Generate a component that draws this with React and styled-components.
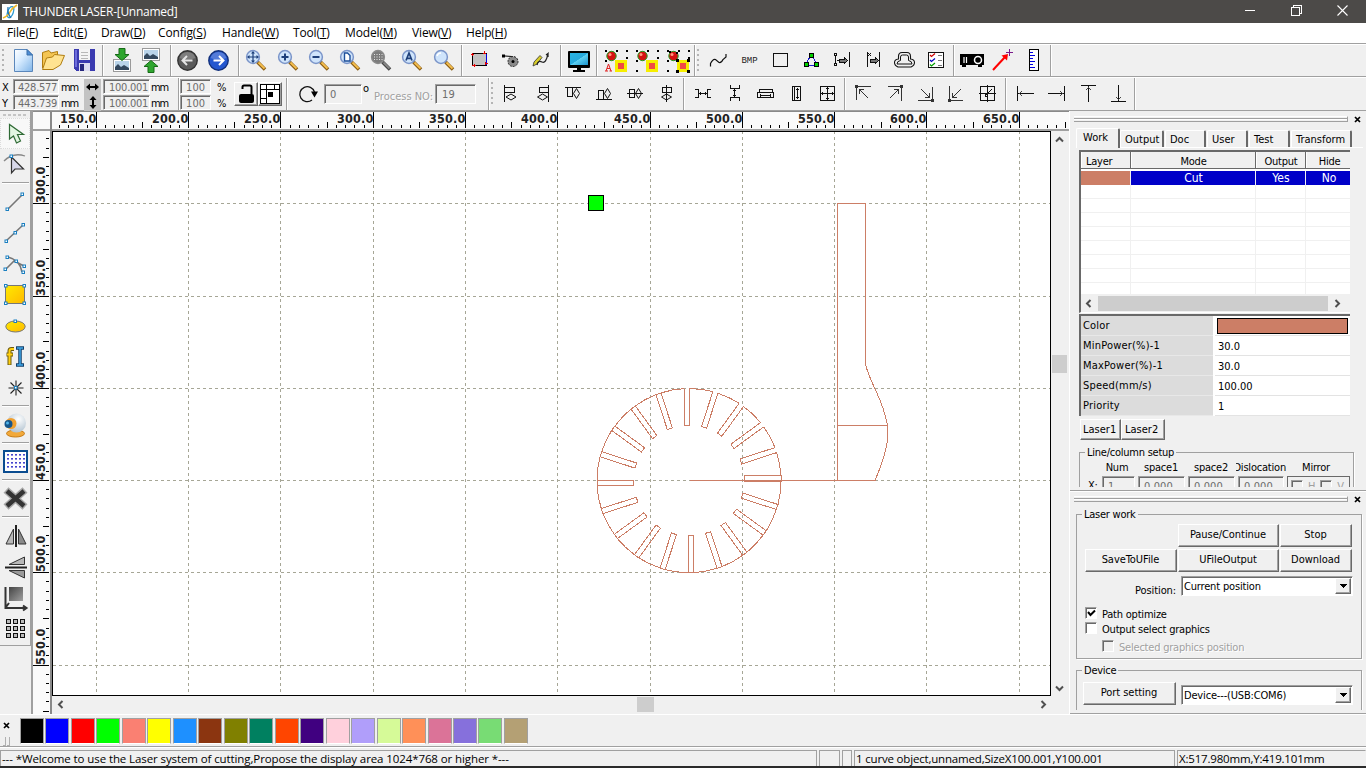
import React from "react";
import styled, { createGlobalStyle, css } from "styled-components";

const TAHOMA = `"DejaVu Sans Condensed", "DejaVu Sans", Tahoma, sans-serif`;
const SEGOE = `"Open Sans", "Noto Sans", "Segoe UI", sans-serif`;
const FACE = "#f0f0f0";
const SHADOW = "#a0a0a0";
const DARK = "#696969";
const CUT = "#cc7e66";

const Global = createGlobalStyle`
  * { box-sizing: border-box; }
  html, body { margin: 0; padding: 0; background: ${FACE}; }
  svg { display: block; flex: none; }
`;

const raised = css`
  border: 1px solid;
  border-color: #fff ${DARK} ${DARK} #fff;
  box-shadow: inset -1px -1px 0 ${SHADOW};
`;
const sunken = css`
  border: 1px solid;
  border-color: ${SHADOW} #fff #fff ${SHADOW};
  box-shadow: inset 1px 1px 0 ${DARK};
`;

const Window = styled.div`
  width: 1366px;
  height: 768px;
  overflow: hidden;
  display: flex;
  flex-direction: column;
  background: ${FACE};
  color: #000;
  font: 11px/13px ${TAHOMA};
  font-stretch: condensed;
  letter-spacing: -0.25px;
  white-space: nowrap;
`;

/* ---------- title and menu ---------- */
const TitleBar = styled.header`
  height: 23px;
  flex: none;
  display: flex;
  align-items: center;
  background: #4c4a48;
  color: #fff;
  font: 12px/20px ${SEGOE};
  letter-spacing: -0.27px;
  padding-left: 2px;
`;
const TitleText = styled.span`
  flex: 1;
  padding-left: 5px;
`;
const Caption = styled.div`
  display: flex;
  width: 139px;
  justify-content: space-around;
  margin-top: -3px;
`;
const MenuBar = styled.nav`
  height: 20px;
  flex: none;
  display: flex;
  background: #fff;
  font: 12px/20px ${SEGOE};
  letter-spacing: -0.15px;
  padding-left: 7px;
`;
const MenuItem = styled.span`
  width: ${(p) => p.$w}px;
  flex: none;
  u { text-underline-offset: 1px; }
`;

/* ---------- toolbars ---------- */
const Bar = styled.div`
  flex: none;
  display: flex;
  height: ${(p) => p.$h}px;
  border-top: 1px solid #fff;
  border-bottom: 1px solid ${SHADOW};
`;
const TopRule = styled.div`
  height: 1px;
  flex: none;
  background: ${SHADOW};
`;
const Group = styled.div`
  flex: none;
  display: flex;
  align-items: center;
  width: ${(p) => p.$w}px;
  padding-left: ${(p) => p.$pad || 0}px;
  padding-bottom: ${(p) => p.$lift || 0}px;
  border-right: 1px solid ${SHADOW};
  box-shadow: 1px 0 0 #fff;
`;
const Slot = styled.div`
  width: ${(p) => p.$w || 31}px;
  height: 30px;
  flex: none;
  display: flex;
  align-items: center;
  justify-content: center;
`;
const Grip = styled.div`
  width: 2px;
  height: 22px;
  margin-left: 2px;
  margin-top: 4px;
  flex: none;
  background: repeating-linear-gradient(#b4b4b4 0 2px, transparent 2px 5px);
`;

const Field = styled.div`
  ${sunken}
  flex: none;
  width: ${(p) => p.$w}px;
  height: ${(p) => p.$h || 15}px;
  padding: ${(p) => p.$p || "1px 0 0 5px"};
  overflow: hidden;
  color: #6d6d6d;
  background: ${FACE};
  letter-spacing: ${(p) => p.$ls || "0.1px"};
`;
const Coords = styled.div`
  display: grid;
  grid-template-columns: 13px 46px 25px 19px 47px 28px;
  grid-template-rows: 15px 15px;
  row-gap: 1px;
  width: 178px;
  flex: none;
  align-content: start;
`;
const Label = styled.span`
  padding: ${(p) => p.$p || "2px 0 0 2px"};
  letter-spacing: ${(p) => p.$ls || "0"};
`;
const DisabledText = styled.span`
  color: #a0a0a0;
  text-shadow: 1px 1px 0 #fff;
`;
const Toggle = styled.div`
  background: #c3c3c3;
  height: 16px;
  width: 17px;
  display: flex;
  align-items: center;
  justify-content: center;
`;
const Scales = styled.div`
  display: grid;
  grid-template-columns: 31px 22px;
  grid-template-rows: 15px 15px;
  row-gap: 1px;
  align-content: start;
  width: 54px;
`;
const SquareButton = styled.div`
  ${raised}
  width: 24px;
  height: 24px;
  flex: none;
  display: flex;
  align-items: center;
  justify-content: center;
`;

/* ---------- work area ---------- */
const Main = styled.div`
  flex: none;
  height: 603px;
  display: flex;
`;
const ToolColumn = styled.div`
  width: 31px;
  flex: none;
  display: flex;
  flex-direction: column;
  align-items: center;
  height: 535px;
  border-right: 1px solid ${SHADOW};
  border-bottom: 1px solid ${SHADOW};
  padding-top: 3px;
`;
const ToolGrip = styled.div`
  width: 24px;
  height: 2px;
  margin-bottom: 2px;
  flex: none;
  background: repeating-linear-gradient(90deg, #c4c4c4 0 3px, transparent 3px 5px);
`;
const ToolRule = styled.div`
  width: 27px;
  height: 2px;
  margin: 2px 0;
  flex: none;
  background: ${SHADOW};
  border-bottom: 1px solid #fff;
`;
const ToolSlot = styled.div`
  width: 30px;
  height: 31px;
  flex: none;
  display: flex;
  align-items: center;
  justify-content: center;
  background: ${(p) => (p.$on ? "#f8f8f8" : "transparent")};
  border: ${(p) => (p.$on ? "1px dotted #dcdcdc" : "none")};
`;
const SideRuler = styled.div`
  width: 21px;
  flex: none;
  border-left: 2px solid ${SHADOW};
  border-right: 2px solid #8a8a8a;
  background: #fafafa;
`;
const CanvasColumn = styled.div`
  width: 1017px;
  flex: none;
`;
const TopRuler = styled.div`
  height: 20px;
  border-top: 1px solid #8a8a8a;
  border-bottom: 2px solid ${SHADOW};
  background: #fafafa;
`;
const CanvasRow = styled.div`
  display: flex;
  height: 565px;
`;
const Sheet = styled.div`
  width: 999px;
  height: 565px;
  flex: none;
  background: #fff;
  border: 1px solid #000;
`;
const VScroll = styled.div`
  flex: 1;
  display: flex;
  flex-direction: column;
  align-items: center;
  padding: 4px 1px 3px 0;
  justify-content: space-between;
`;
const HScroll = styled.div`
  height: 18px;
  display: flex;
  align-items: center;
  justify-content: space-between;
  padding: 0 21px 1px 4px;
`;
const Thumb = styled.div`
  background: #cdcdcd;
  width: ${(p) => p.$w}px;
  height: ${(p) => p.$h}px;
  margin: ${(p) => p.$m || 0};
`;

/* ---------- right dock ---------- */
const Dock = styled.aside`
  flex: 1;
  border-left: 1px solid #fff;
  display: flex;
  flex-direction: column;
`;
const DockPane = styled.section`
  height: ${(p) => p.$h}px;
  flex: none;
  border-bottom: 1px solid ${SHADOW};
  box-shadow: 0 1px 0 #fff;
`;
const PaneBody = styled.div`
  height: ${(p) => p.$h}px;
  overflow: hidden;
`;
const PaneHead = styled.div`
  display: flex;
  align-items: center;
  height: 12px;
  margin: 2px 0 0 4px;
  gap: 6px;
`;
const PaneGrip = styled.div`
  width: 274px;
  height: 6px;
  border-top: 1px solid #fff;
  border-bottom: 1px solid ${SHADOW};
  border-right: 1px solid ${SHADOW};
  background: linear-gradient(#f0f0f0 0 1px, ${SHADOW} 1px 2px, #fff 2px 3px, #f0f0f0 3px);
`;
const Tabs = styled.div`
  display: flex;
  align-items: flex-end;
  height: 20px;
  margin: 3px 3px 0 6px;
  border-bottom: 1px solid #fff;
`;
const Tab = styled.div`
  width: ${(p) => p.$w}px;
  height: ${(p) => (p.$on ? 20 : 17)}px;
  margin-right: ${(p) => (p.$on ? 0 : 1)}px;
  margin-bottom: ${(p) => (p.$on ? -1 : 0)}px;
  flex: none;
  padding: ${(p) => (p.$on ? "2px 0 0 6px" : "2px 0 0 4px")};
  background: ${FACE};
  border-top: 1px solid #fff;
  border-left: 1px solid #fff;
  border-right: 2px solid ${DARK};
  border-radius: 2px 2px 0 0;
  letter-spacing: 0;
`;
const LayerBox = styled.div`
  width: 271px;
  height: 163px;
  margin: 2px 0 0 9px;
  border-left: 2px solid ${DARK};
  border-top: 2px solid ${DARK};
  border-bottom: 1px solid #fff;
  background: #fff;
  overflow: hidden;
`;
const columns = css`
  display: grid;
  grid-template-columns: 50px 125px 50px 46px;
`;
const LayerHead = styled.div`
  ${columns}
  height: 17px;
  margin-bottom: 2px;
  border-bottom: 1px solid ${DARK};
  background: ${FACE};
`;
const HeadCell = styled.div`
  border-right: ${(p) => (p.$last ? "none" : `1px solid ${DARK}`)};
  border-left: 1px solid #fff;
  text-align: ${(p) => (p.$left ? "left" : "center")};
  padding: 3px 0 0 ${(p) => (p.$left ? 4 : 0)}px;
  height: 16px;
`;
const LayerRow = styled.div`
  ${columns}
  height: ${(p) => p.$h || 14}px;
`;
const Cell = styled.div`
  border-right: 1px solid #f0f0f0;
  border-bottom: 1px solid #f0f0f0;
  background: ${(p) => p.$bg || "#fff"};
  color: #fff;
  font-size: 12px;
  line-height: 14px;
  letter-spacing: 0;
  text-align: center;
  padding-left: 1px;
`;
const ListScroll = styled.div`
  height: 17px;
  display: flex;
  align-items: center;
  gap: 5px;
  padding: 0 3px;
  background: ${FACE};
`;
const Params = styled.div`
  width: 271px;
  height: 102px;
  margin: 1px 0 0 9px;
  border-left: 2px solid ${DARK};
  border-top: 2px solid ${DARK};
  background: #fff;
`;
const ParamRow = styled.div`
  display: grid;
  grid-template-columns: 132px 137px;
  height: 20px;
`;
const ParamName = styled.div`
  background: #dcdcdc;
  padding: 3px 0 0 2px;
  border-bottom: 1px solid #e8e8e8;
  letter-spacing: 0.2px;
`;
const ParamValue = styled.div`
  margin-left: 2px;
  padding: ${(p) => (p.$swatch ? "2px 2px 1px 2px" : "4px 0 0 3px")};
  border-bottom: 1px solid #e3e3e3;
  letter-spacing: 0;
`;
const Swatch = styled.div`
  height: 16px;
  background: ${CUT};
  border: 1px solid #000;
`;
const LaserTabs = styled.div`
  display: flex;
  margin: 3px 0 0 10px;
`;
const LaserTab = styled.div`
  ${raised}
  width: ${(p) => p.$w}px;
  height: 21px;
  padding: 3px 0 0 ${(p) => p.$pl || 2}px;
  letter-spacing: 0;
`;
const Fieldset = styled.fieldset`
  margin: ${(p) => p.$m};
  width: ${(p) => p.$w}px;
  height: ${(p) => p.$h}px;
  padding: 0;
  border: 1px solid ${SHADOW};
  box-shadow: 1px 1px 0 #fff;
  min-width: 0;
`;
const Legend = styled.legend`
  margin-left: 5px;
  padding: 0 2px;
  height: 13px;
  line-height: 13px;
  letter-spacing: -0.24px;
`;
const ArrayHead = styled.div`
  display: grid;
  grid-template-columns: 38px 50px 50px 50px 60px;
  margin-left: 18px;
  text-align: center;
  margin-top: 2px;
  letter-spacing: -0.2px;
  span { overflow: hidden; display: flex; justify-content: center; }
  span:nth-child(4) { justify-content: flex-end; }
`;
const ArrayRow = styled.div`
  display: flex;
  margin: 2px 0 0 8px;
  gap: 3px;
`;
const AxisLabel = styled.span`
  width: 11px;
  padding-top: 3px;
`;
const MirrorBox = styled.div`
  border: 1px solid ${DARK};
  width: 63px;
  height: 22px;
  display: flex;
  gap: 5px;
  padding: 3px 0 0 3px;
  color: #a0a0a0;
`;
const ButtonRow = styled.div`
  display: flex;
  justify-content: flex-end;
  align-items: flex-end;
  gap: ${(p) => p.$gap || 1}px;
  padding-right: ${(p) => p.$pr || 9}px;
  margin-top: ${(p) => p.$mt}px;
`;
const Button = styled.div`
  ${raised}
  width: ${(p) => p.$w}px;
  height: 23px;
  flex: none;
  text-align: center;
  line-height: 20px;
  padding-right: 1px;
  letter-spacing: -0.05px;
`;
const SelectRow = styled.div`
  display: flex;
  justify-content: flex-end;
  gap: 5px;
  padding-right: 8px;
  margin-top: 4px;
`;
const Select = styled.div`
  ${sunken}
  width: 172px;
  height: 20px;
  background: #fff;
  display: flex;
  justify-content: space-between;
  padding: 1px 1px 1px 2px;
  line-height: ${(p) => p.$lh || 18}px;
  letter-spacing: -0.17px;
`;
const DropButton = styled.div`
  ${raised}
  background: ${FACE};
  width: 16px;
  height: 16px;
  display: flex;
  align-items: center;
  justify-content: center;
`;
const CheckRow = styled.div`
  display: flex;
  gap: 5px;
  margin: ${(p) => p.$m};
  height: 15px;
  color: ${(p) => (p.$off ? "#a0a0a0" : "#000")};
  text-shadow: ${(p) => (p.$off ? "1px 1px 0 #fff" : "none")};
  line-height: 15px;
  letter-spacing: -0.21px;
`;
const CheckBox = styled.div`
  ${sunken}
  width: 12px;
  height: 12px;
  flex: none;
  background: ${(p) => (p.$off ? FACE : "#fff")};
`;

/* ---------- palette and status ---------- */
const Palette = styled.div`
  height: 33px;
  flex: none;
  border-top: 1px solid #fff;
  border-bottom: 1px solid ${SHADOW};
  display: flex;
  padding: 3px 0 0 3px;
`;
const PaletteHead = styled.div`
  width: 17px;
  padding-top: 4px;
  display: flex;
  flex-direction: column;
  gap: 8px;
`;
const Chip = styled.div`
  width: 24px;
  height: 26px;
  margin-right: 1.47px;
  flex: none;
  background: ${(p) => p.$c};
  border: 1px solid ${SHADOW};
  border-bottom-color: #fff;
`;
const Status = styled.footer`
  height: 19px;
  flex: none;
  border-top: 1px solid #fff;
  padding-top: 2px;
  display: flex;
  gap: 2px;
  font: 11.5px/15px ${SEGOE};
`;
const StatusCell = styled.div`
  width: ${(p) => p.$w}px;
  flex: none;
  height: 16px;
  border: 1px solid ${SHADOW};
  border-right-color: ${(p) => (p.$last ? "transparent" : SHADOW)};
  border-bottom: none;
  padding-left: 1px;
  letter-spacing: ${(p) => p.$ls || "-0.18px"};
`;
const Taskbar = styled.div`
  flex: 1;
  background: #2b2b2b;
`;

/* ---------- icons ---------- */
const Ico = ({ children, soft }) => (
  <svg width="31" height="31" viewBox="0 0 31 31" fill="none" shapeRendering={soft ? "auto" : "crispEdges"}>
    {children}
  </svg>
);

const NewIcon = () => (
  <Ico soft>
    <defs>
      <linearGradient id="sheet" x1="0" y1="0" x2="1" y2="1">
        <stop offset="0" stopColor="#fff" />
        <stop offset=".4" stopColor="#d8ecff" />
        <stop offset="1" stopColor="#7fb4e8" />
      </linearGradient>
    </defs>
    <path d="M6.500 4.500H19L24.500 10V26.500H6.500Z" fill="url(#sheet)" stroke="#5b87bb" />
    <path d="M19 4.500V10H24.500Z" fill="#4d8fd8" stroke="#3a6ea8" />
  </Ico>
);
const OpenIcon = () => (
  <Ico soft>
    <path d="M3.500 23V7.500L10 5.500L12 8L18.500 6.500V11" fill="#f4c553" stroke="#b07d10" />
    <path d="M3.500 24.500L7.500 13L13.500 12L15.500 9.500L25.500 10.500L21.500 20L14 24.500Z" fill="#ffe391" stroke="#b07d10" />
  </Ico>
);
const SaveIcon = () => (
  <Ico>
    <path d="M4 4H25V26H6L4 24Z" fill="#3b3bb0" />
    <path d="M5 5H7V22H5Z" fill="#6d6ddb" />
    <path d="M9 4H20V15H9Z" fill="#f4f4f4" />
    <path d="M11 7H18M11 10H18M11 13H18" stroke="#b8b8b8" />
    <path d="M9 18H20V26H9Z" fill="#dcdcf0" />
    <path d="M10 19H14V26H10Z" fill="#26267c" />
  </Ico>
);
const Photo = ({ y }) => (
  <g>
    <rect x="7.500" y={y + 0.5} width="17" height="12" fill="#fff" stroke="#9a9a9a" />
    <rect x="9" y={y + 2} width="14" height="9" fill="#b9d4ea" />
    <path d={`M9 ${y + 11}V${y + 8}L12 ${y + 5}L15 ${y + 8}L18 ${y + 6}L23 ${y + 9}V${y + 11}Z`} fill="#33485e" />
  </g>
);
const ImportIcon = () => (
  <Ico soft>
    <Photo y={14} />
    <path d="M13 3.500H19V9.500H23L16 15.500L9 9.500H13Z" fill="#2fa62f" stroke="#176b17" />
  </Ico>
);
const ExportIcon = () => (
  <Ico soft>
    <Photo y={3} />
    <path d="M13 27.500H19V21.500H23L16 15.500L9 21.500H13Z" fill="#2fa62f" stroke="#176b17" />
  </Ico>
);
const ArrowDisc = ({ fill, edge, flip }) => (
  <Ico soft>
    <circle cx="15.500" cy="15.500" r="9.700" fill={fill} stroke={edge} strokeWidth="1.400" />
    <path d="M7.500 13A8.300 8.300 0 0 1 23.500 13Q15.500 16 7.500 13Z" fill="#fff" opacity=".22" />
    <path
      d="M20.500 15.500H10.500M15 11L10.500 15.500L15 20"
      transform={flip ? "rotate(180 15.500 15.500)" : undefined}
      stroke={flip ? "#fff" : "#e4e4e4"}
      strokeWidth="2"
    />
  </Ico>
);
const Lens = ({ children, grey }) => (
  <Ico soft>
    <path d="M16.500 17L24 24.500" stroke={grey ? "#444" : "#8a5d13"} strokeWidth="3.600" />
    <path d="M17.500 17.500L23.500 23.500" stroke={grey ? "#888" : "#f5bf4f"} strokeWidth="1.800" />
    <circle cx="12" cy="12" r="6.400" fill={grey ? "#7c7c7c" : "#cfe4fb"} stroke={grey ? "#8b8b8b" : "#7b95c9"} strokeWidth="1.500" />
    {children}
  </Ico>
);
const ZoomPan = () => (
  <Lens>
    <path d="M12 7V17M7 12H17" stroke="#1d3f7a" strokeWidth="1.200" />
    <path d="M12 6L14 8.500H10ZM12 18L14 15.500H10ZM6 12L8.500 10V14ZM18 12L15.500 10V14Z" fill="#1d3f7a" />
  </Lens>
);
const ZoomIn = () => (
  <Lens>
    <path d="M12 8.500V15.500M8.500 12H15.500" stroke="#1d3f7a" strokeWidth="2" />
  </Lens>
);
const ZoomOut = () => (
  <Lens>
    <path d="M8.500 12H15.500" stroke="#1d3f7a" strokeWidth="2" />
  </Lens>
);
const ZoomPage = () => (
  <Lens>
    <path d="M9.500 8H12.500L15 10.500V16H9.500Z" fill="#fff" stroke="#1d4f9a" strokeWidth="1.400" />
  </Lens>
);
const ZoomGrid = () => (
  <Lens grey>
    <path d="M8 9.500H17M8 12H17M8 14.500H17" stroke="#e4e4e4" strokeDasharray="1 1.500" />
  </Lens>
);
const ZoomAll = () => (
  <Lens>
    <path d="M9 15.500L12 8L15 15.500M10 13.300H14" stroke="#1d3f7a" strokeWidth="1.700" />
  </Lens>
);
const ZoomPlain = () => (
  <Lens>
    <path d="M8 11Q9 8 12 8" stroke="#fff" strokeWidth="1.500" />
  </Lens>
);
const FrameIcon = () => (
  <Ico>
    <rect x="8.500" y="8.500" width="14" height="12" fill="#c3c3c3" stroke="#000" />
    <path d="M22.500 9V20" stroke="#0000e0" />
    <path d="M8.500 8V11M7 9.500H10M20.500 6V9M19 8.500H22M10.500 19V22M8 20.500H12M21 18.500H24M21.500 17V20" stroke="#e00000" />
  </Ico>
);
const GearIcon = () => (
  <Ico soft>
    <rect x="7" y="9.500" width="3" height="3" fill="#000" />
    <path d="M10 11L17 11.500" stroke="#000" />
    <circle cx="18" cy="16.500" r="5" fill="#8a8a8a" stroke="#222" strokeDasharray="2 1" />
    <circle cx="18" cy="16.500" r="1.500" fill="#000" />
  </Ico>
);
const PenIcon = () => (
  <Ico soft>
    <path d="M7 21L8 17L14 10.500L16 12.500L11 19Z" fill="#d8cc28" stroke="#333" strokeWidth=".8" />
    <path d="M11 20Q12 15 16 17T22 8.500L20 10M22 8.500V12" stroke="#222" strokeWidth="1.300" />
  </Ico>
);
const MonitorIcon = () => (
  <Ico soft>
    <defs>
      <linearGradient id="screen" x1="0" y1="0" x2="1" y2="1">
        <stop offset="0" stopColor="#28b4e4" />
        <stop offset=".5" stopColor="#27a9dc" />
        <stop offset=".52" stopColor="#5dd0f2" />
        <stop offset="1" stopColor="#1c93cc" />
      </linearGradient>
    </defs>
    <rect x="4" y="6" width="22" height="17" rx="1" fill="#000" />
    <rect x="6" y="8" width="18" height="12" fill="url(#screen)" />
    <path d="M13 22H17V25H21V27H9V25H13Z" fill="#000" />
  </Ico>
);
const NodeIcon = ({ letter, dense }) => (
  <Ico>
    <path d="M4 5h2v2h-2zM15 5h2v2h-2zM25 5h2v2h-2zM4 15h2v2h-2zM25 12h2v2h-2z" fill="#000" />
    <circle cx="10.500" cy="11" r="4.700" fill="#d41212" stroke="#21a021" shapeRendering="auto" />
    <circle cx="9" cy="9.500" r="1.500" fill="#ff9a80" shapeRendering="auto" />
    <rect x="14" y="15" width="12" height="12" fill="#f6ee00" />
    <rect x="17" y="18" width="6" height="6" fill="#f04a44" />
    {letter ? (
      <path d="M5 26L7.500 19L10 26M6 23.500H9M4 26H7M8.500 26H11" stroke="#e02020" shapeRendering="auto" />
    ) : (
      <path d="M4 25h2v2h-2z" fill="#000" />
    )}
    {dense && <path d="M13 14h3v3h-3zM24 25h3v3h-3zM6 6h2v2h-2zM13 25h3v3h-3zM24 14h3v3h-3zM13 7h2v2h-2z" fill="#000" />}
  </Ico>
);
const CurveIcon = () => (
  <Ico soft>
    <path d="M7.500 21.500V18.500Q10 13.500 12.500 14.500L16 17.500Q18.500 18 20 14.500L23 12V9" stroke="#111" strokeWidth="1.200" />
  </Ico>
);
const BmpText = styled.span`
  font: 9px/10px "Liberation Mono", monospace;
  letter-spacing: 0;
  color: #222;
`;
const SquareIcon = () => (
  <Ico>
    <rect x="8.500" y="8.500" width="14" height="13" stroke="#111" />
  </Ico>
);
const NodesIcon = () => (
  <Ico>
    <path d="M16 11L21 19M11 20.500H20M15 10L10 19" stroke="#1a1ad0" />
    <path d="M13.500 8.500h4v4h-4zM8.500 17.500h4v4h-4zM18.500 17.500h4v4h-4z" fill="#00d000" stroke="#000" />
  </Ico>
);
const OffsetIcon = ({ small }) => (
  <Ico>
    <path d={small ? "M9.500 7V22M21.500 7V22" : "M8.500 11V19M22.500 7V22M10 15.500H12"} stroke="#111" />
    {small ? <path d="M10 8L13 11M13 8L10 11" stroke="#111" /> : <path d="M7.500 8.500h2v2h-2zM7.500 18.500h2v2h-2z" stroke="#111" />}
    <path d="M12.500 14H17V12.500L20.500 15.500L17 18.500V17H12.500Z" fill="#777" stroke="#111" />
  </Ico>
);
const OutlineIcon = () => (
  <Ico soft>
    <path d="M9.500 14V11.500Q9.500 7.500 13 7.500H18Q21.500 7.500 21.500 11.500V14Q25.500 14.500 25.500 17.500T22 22H9Q5.500 20.500 5.500 17.500T9.500 14Z" stroke="#111" strokeWidth="1.100" />
    <path d="M11.500 15.500V12Q11.500 10 13.500 10H17.500Q19.500 10 19.500 12V15.500Q23 16 23 19H8Q8 16 11.500 15.500Z" stroke="#111" />
  </Ico>
);
const ChecklistIcon = () => (
  <Ico>
    <rect x="8.500" y="7.500" width="15" height="15" fill="#fff" stroke="#111" />
    <path d="M18 10.500H22M18 15.500H22M18 20.500H22" stroke="#777" />
    <g shapeRendering="auto" strokeWidth="1.200">
      <path d="M10 10L11.500 11.500L15 8.500" stroke="#d00000" />
      <path d="M10 15L11.500 16.500L15 13.500" stroke="#0000c0" />
      <path d="M10 19.500L11.500 21L15 18" stroke="#00a000" />
    </g>
  </Ico>
);
const ProjectorIcon = () => (
  <Ico soft>
    <path d="M4 9H28V20H26V22H22V20H10V22H6V20H4Z" fill="#000" />
    <circle cx="22" cy="15" r="3.500" stroke="#fff" strokeWidth="1.500" />
    <path d="M8 12V18M10.500 12V18" stroke="#fff" strokeWidth="1.200" />
  </Ico>
);
const PointerLineIcon = () => (
  <Ico soft>
    <path d="M6 25L18 12" stroke="#f00" strokeWidth="2" />
    <path d="M14.500 10.500L21 9L20 15.500Z" fill="#f00" />
    <path d="M22.500 4V11M19 7.500H26" stroke="#7a1a8a" />
  </Ico>
);
const RulerIcon = () => (
  <Ico>
    <rect x="11.500" y="4.500" width="9" height="21" fill="#fff" stroke="#000" />
    <path d="M12 7.500H15M12 10.500H17M12 13.500H15M12 16.500H17M12 19.500H15M12 22.500H17" stroke="#0000e0" />
  </Ico>
);
const L = ({ d }) => (
  <Ico>
    <path d={d} stroke="#111" />
  </Ico>
);
const AlignIcon = ({ d, x, y, rx, ry }) => (
  <Ico>
    <path d={d} stroke="#111" />
    <path d={`M${x - rx} ${y}L${x} ${y - ry}L${x + rx} ${y}L${x} ${y + ry}Z`} stroke="#111" shapeRendering="auto" />
  </Ico>
);
const CornerIcon = ({ r }) => (
  <Ico>
    <g transform={`rotate(${r} 15.500 15.500)`}>
      <path d="M8.500 22V8.500H23" stroke="#333" />
      <path d="M7 7h3v3h-3z" fill="#333" />
      <path d="M11 11L20 20M11.500 16V11.500H16" stroke="#333" />
    </g>
  </Ico>
);
const EdgeIcon = ({ r }) => (
  <Ico>
    <g transform={`rotate(${r} 15.500 15.500)`}>
      <path d="M7.500 8V23M8 15.500H24" stroke="#111" />
      <path d="M12 13L9.500 15.500L12 18" stroke="#444" />
    </g>
  </Ico>
);
const CloseX = () => (
  <svg width="7" height="7" viewBox="0 0 7 7">
    <path d="M1 1L6 6M6 1L1 6" stroke="#000" strokeWidth="1.700" />
  </svg>
);
const Chevron = ({ r }) => (
  <svg width="9" height="9" viewBox="0 0 9 9" fill="none">
    <path d="M1 6.500L4.500 3L8 6.500" transform={`rotate(${r} 4.500 4.500)`} stroke="#505050" strokeWidth="2" />
  </svg>
);
const DropArrow = () => (
  <DropButton>
    <svg width="7" height="4" viewBox="0 0 7 4" shapeRendering="crispEdges">
      <path d="M0 0H7L3.500 4Z" />
    </svg>
  </DropButton>
);

/* left tool icons */
const Handle = ({ x, y }) => <rect x={x - 1} y={y - 1} width="2.500" height="2.500" fill="#fff" stroke="#1a7fc0" />;
const ArrowTool = () => (
  <Ico soft>
    <path d="M9.500 6.500V21L13.500 18L16.500 25L20.500 23L17.500 16.500L23.500 16.500Z" fill="#e2f6e2" stroke="#2f6a35" strokeWidth="1.200" />
  </Ico>
);
const NodeTool = () => (
  <Ico soft>
    <path d="M4 12Q13 3 25 7" stroke="#888" strokeWidth="1.300" />
    <path d="M11.500 8V24L15 20L23.500 20Z" fill="#d8d8ea" stroke="#333" strokeWidth="1.200" />
    <Handle x={11} y={7} />
  </Ico>
);
const LineTool = () => (
  <Ico soft>
    <path d="M8 23L22 9" stroke="#777" strokeWidth="1.600" />
    <Handle x={7} y={23} />
    <Handle x={22} y={8} />
  </Ico>
);
const PolyTool = () => (
  <Ico soft>
    <path d="M6 24L23 8" stroke="#777" strokeWidth="1.600" />
    <Handle x={6} y={24} />
    <Handle x={15} y={15.5} />
    <Handle x={23} y={7.5} />
  </Ico>
);
const SplineTool = () => (
  <Ico soft>
    <path d="M6 21L14 13L24 18M8 9Q20 12 22 24" stroke="#777" strokeWidth="1.600" />
    <Handle x={5} y={21} />
    <Handle x={7} y={9} />
    <Handle x={16} y={13} />
    <Handle x={24} y={18} />
    <Handle x={23} y={24} />
  </Ico>
);
const Gold = () => (
  <defs>
    <linearGradient id="gold" x1="0" y1="0" x2="1" y2="1">
      <stop offset="0" stopColor="#ffea00" />
      <stop offset="1" stopColor="#ffb800" />
    </linearGradient>
  </defs>
);
const RectTool = () => (
  <Ico soft>
    <Gold />
    <rect x="5.500" y="6.500" width="19" height="18" fill="url(#gold)" stroke="#777" />
    <Handle x={5.5} y={6.5} />
    <Handle x={24} y={6.5} />
    <Handle x={5.5} y={24} />
    <Handle x={24} y={24} />
  </Ico>
);
const EllipseTool = () => (
  <Ico soft>
    <ellipse cx="15.500" cy="16.500" rx="9.700" ry="5.500" fill="url(#gold)" stroke="#777" />
    <Handle x={15} y={11} />
  </Ico>
);
const TextTool = () => (
  <Ico soft>
    <path d="M14 8H11.500Q9.500 8 9.500 10V24M6.500 13.500H13" stroke="#6b5a10" strokeWidth="4" />
    <path d="M14 8H11.500Q9.500 8 9.500 10V23.500M7 13.500H12.500" stroke="#ffcf10" strokeWidth="2" />
    <path d="M16 7H24M20 7V24M16 24H24" stroke="#123f6a" strokeWidth="3.500" />
    <path d="M17 7H23M20 7V24M17 24H23" stroke="#3fa6e8" strokeWidth="1.500" />
  </Ico>
);
const PointTool = () => (
  <Ico soft>
    <path d="M16 8.500V23.500M8.500 16H23.500M10.500 10.500L21.500 21.500M21.500 10.500L10.500 21.500" stroke="#222" strokeWidth="1.100" />
    <Handle x={15.5} y={15.5} />
  </Ico>
);
const CameraTool = () => (
  <Ico soft>
    <defs>
      <radialGradient id="ball" cx=".6" cy=".3" r=".8">
        <stop offset="0" stopColor="#fff" />
        <stop offset="1" stopColor="#a9bccb" />
      </radialGradient>
    </defs>
    <ellipse cx="15.500" cy="24.500" rx="9" ry="3.500" fill="#f2a93a" stroke="#c77c14" />
    <circle cx="16.500" cy="14" r="9.500" fill="url(#ball)" />
    <circle cx="11" cy="14.500" r="5.500" fill="#f0a030" />
    <circle cx="8.500" cy="15" r="4" fill="#15568c" />
    <circle cx="7.500" cy="14" r="1.500" fill="#4fb4ea" />
  </Ico>
);
const GridTool = () => (
  <Ico>
    <rect x="4" y="5" width="23" height="21" fill="#fff" stroke="#0a4c90" strokeWidth="2" />
    {[8.5, 12.5, 16.5, 20.5].map((y) => (
      <path key={y} d={`M7 ${y}H25`} stroke="#4646cc" strokeDasharray="2 2" />
    ))}
    {[9.5, 13.5, 17.5, 21.5].map((y) => (
      <path key={y} d={`M7 ${y}H25`} stroke="#8c8ce4" strokeDasharray="2 2" />
    ))}
  </Ico>
);
const DeleteTool = () => (
  <Ico soft>
    <path d="M6 7L25 24M25 7L6 24" stroke="#a8a8a8" strokeWidth="7.500" />
    <path d="M7 8L24 23M24 8L7 23" stroke="#333" strokeWidth="4.500" />
  </Ico>
);
const MirrorTool = () => (
  <Ico soft>
    <path d="M13.500 9V24H6Z" fill="#b8b8b8" stroke="#333" />
    <path d="M18.500 9V24H26Z" fill="#8a8a8a" stroke="#333" />
    <path d="M16 5V27" stroke="#222" strokeWidth="2" />
  </Ico>
);
const MirrorVTool = () => (
  <Ico soft>
    <path d="M9 13.500L24.500 6V13.500Z" fill="#b8b8b8" stroke="#333" />
    <path d="M9 19.500L24.500 27V19.500Z" fill="#9a9a9a" stroke="#333" />
    <path d="M5 16.500H27" stroke="#222" strokeWidth="2" />
  </Ico>
);
const OriginTool = () => (
  <Ico soft>
    <defs>
      <linearGradient id="slab" x1="0" y1="0" x2="1" y2="1">
        <stop offset="0" stopColor="#444" />
        <stop offset="1" stopColor="#a0a0a0" />
      </linearGradient>
    </defs>
    <rect x="9" y="5" width="14" height="14" fill="url(#slab)" />
    <path d="M5.500 5V26H26M23 23.500L26.500 26L23 28.500M6 25L9 21" stroke="#333" strokeWidth="2" />
  </Ico>
);
const ArrayTool = () => (
  <Ico>
    {[6, 13, 20].map((y) =>
      [6, 13, 20].map((x) => <rect key={`${x}-${y}`} x={x + 0.5} y={y + 0.5} width="4" height="4" fill="#bbb" stroke="#111" />)
    )}
  </Ico>
);

/* ---------- drawing surface ---------- */
const GRID_X = [96, 188, 280, 373, 465, 557, 650, 742, 834, 926, 1019];
const GRID_Y = [203, 296, 388, 480, 572, 665];
const STEP = 9.23;

const ticks = (majors, from, to) => {
  const out = [];
  const base = majors[0];
  for (let k = -12; k < 130; k++) {
    const p = Math.round(base + k * STEP);
    if (p >= from && p <= to && k % 10 !== 0) out.push({ p, mid: k % 5 === 0 });
  }
  return out;
};

const HRuler = () => (
  <svg width="1017" height="17" viewBox="52 112 1017 17" shapeRendering="crispEdges">
    {ticks(GRID_X, 54, 1066).map(({ p, mid }) => (
      <path key={p} d={`M${p + 0.5} ${mid ? 122 : 125}V128`} stroke="#000" />
    ))}
    {GRID_X.map((x, i) => (
      <g key={x}>
        <path d={`M${x + 0.5} 112V128`} stroke="#000" />
        <text x={x - 36} y="123" textLength="36" fontFamily={TAHOMA} fontWeight="bold" fontSize="12.500" fill="#222">
          {150 + i * 50}.0
        </text>
      </g>
    ))}
  </svg>
);
const VRuler = () => (
  <svg width="17" height="583" viewBox="33 131 17 583" shapeRendering="crispEdges">
    {ticks(GRID_Y, 132, 712).map(({ p, mid }) => (
      <path key={p} d={`M${mid ? 43 : 46} ${p + 0.5}H49`} stroke="#000" />
    ))}
    {GRID_Y.map((y, i) => (
      <g key={y}>
        <path d={`M33 ${y + 0.5}H49`} stroke="#000" />
        <text transform={`translate(45 ${y}) rotate(-90)`} textLength="36" fontFamily={TAHOMA} fontWeight="bold" fontSize="12.500" fill="#222">
          {300 + i * 50}.0
        </text>
      </g>
    ))}
  </svg>
);

const CX = 689;
const CY = 480.6;
const polar = (px, py, deg) => {
  const a = (deg * Math.PI) / 180;
  return [CX + px * Math.cos(a) - py * Math.sin(a), CY + px * Math.sin(a) + py * Math.cos(a)]
    .map((v) => v.toFixed(1))
    .join(" ");
};
const spokes = Array.from({ length: 20 }, (_, i) => {
  const a = i * 18;
  const closed = i > 4 ? "Z" : "";
  return (
    `M${polar(0.5, -92, a)}L${polar(0.5, -55.3, a)}L${polar(-4.8, -55.3, a)}L${polar(-4.8, -92, a)}${closed}` +
    `M${polar(0.5, -92, a)}A92.300 92.300 0 0 1 ${polar(-4.8, -92, a + 18)}`
  );
}).join("");

const Drawing = () => (
  <svg width="997" height="563" viewBox="53 132 997 563" fill="none" shapeRendering="crispEdges">
    {GRID_X.map((x) => (
      <path key={x} d={`M${x + 0.5} 131V695`} stroke="#a6a696" strokeDasharray="3 3" />
    ))}
    {GRID_Y.map((y) => (
      <path key={y} d={`M53 ${y + 0.5}H1050`} stroke="#a6a696" strokeDasharray="3 3" />
    ))}
    <path d="M837.500 480V203.500H865.500V364.500Q868 374 876 391Q884.500 409 887.500 425.500V438Q887 452 875 480.500H689.500M837.500 425.500H887.500" stroke={CUT} />
    <path d={spokes} stroke={CUT} />
    <rect x="588.500" y="195.500" width="15" height="15" fill="#00ff00" stroke="#000" />
  </svg>
);

/* ---------- data ---------- */
const MENU = [
  ["File", "F", 46],
  ["Edit", "E", 48],
  ["Draw", "D", 57],
  ["Config", "S", 64],
  ["Handle", "W", 71],
  ["Tool", "T", 52],
  ["Model", "M", 67],
  ["View", "V", 54],
  ["Help", "H", 60],
];
const COLORS = [
  "#000000", "#0000ff", "#ff0000", "#00ff00", "#fa8072", "#ffff00", "#1e90ff", "#8b3510", "#808000", "#008060",
  "#ff4500", "#400080", "#ffd0dc", "#b09efa", "#d6fa98", "#ff9058", "#db7398", "#8670dc", "#78dc74", "#b4a074",
];
const PARAMS = [
  ["MinPower(%)-1", "30.0"],
  ["MaxPower(%)-1", "30.0"],
  ["Speed(mm/s)", "100.00"],
  ["Priority", "1"],
];
const ROW_HEIGHTS = [14, 14, 14, 14, 14, 14, 14, 12];

export default function App() {
  return (
    <Window>
      <Global />
      <TitleBar>
        <svg width="16" height="16" viewBox="0 0 16 16" fill="none">
          <rect width="16" height="16" fill="#fff" />
          <ellipse cx="8.500" cy="8" rx="2.800" ry="5.800" transform="rotate(18 8 8)" stroke="#2b9ad0" strokeWidth="1.300" />
          <path d="M1 14Q6 12 8 8T15 1" stroke="#efb82a" strokeWidth="1.600" />
          <path d="M6 3Q5 9 9 14" stroke="#1f6fb0" strokeWidth="1.200" />
        </svg>
        <TitleText>THUNDER LASER-[Unnamed]</TitleText>
        <Caption>
          <svg width="11" height="11" viewBox="0 0 11 11" shapeRendering="crispEdges">
            <path d="M0 5.500H10" stroke="#fff" />
          </svg>
          <svg width="11" height="11" viewBox="0 0 11 11" fill="none" shapeRendering="crispEdges">
            <path d="M.5 2.500H8.500V10.500H.5ZM2.500 2V.5H10.500V8.500H9" stroke="#fff" />
          </svg>
          <svg width="11" height="11" viewBox="0 0 11 11">
            <path d="M.5 .5L10.500 10.500M10.500 .5L.5 10.500" stroke="#fff" strokeWidth="1.100" />
          </svg>
        </Caption>
      </TitleBar>
      <MenuBar>
        {MENU.map(([name, key, w]) => (
          <MenuItem key={name} $w={w}>
            {name}(<u>{key}</u>)
          </MenuItem>
        ))}
      </MenuBar>
      <TopRule />

      <Bar $h={33}>
        <Grip />
        <Group $w={99} $pad={4}>
          <Slot><NewIcon /></Slot>
          <Slot><OpenIcon /></Slot>
          <Slot><SaveIcon /></Slot>
        </Group>
        <Group $w={68} $pad={3}>
          <Slot $w={30}><ImportIcon /></Slot>
          <Slot $w={29}><ExportIcon /></Slot>
        </Group>
        <Group $w={68} $pad={0}>
          <Slot $w={32}><ArrowDisc fill="#5a5a5a" edge="#333" /></Slot>
          <Slot><ArrowDisc fill="#2457cf" edge="#12307c" flip /></Slot>
        </Group>
        <Group $w={223} $pad={2}>
          <Slot><ZoomPan /></Slot>
          <Slot $w={32}><ZoomIn /></Slot>
          <Slot><ZoomOut /></Slot>
          <Slot><ZoomPage /></Slot>
          <Slot><ZoomGrid /></Slot>
          <Slot><ZoomAll /></Slot>
          <Slot $w={32}><ZoomPlain /></Slot>
        </Group>
        <Group $w={99} $pad={2}>
          <Slot><FrameIcon /></Slot>
          <Slot><GearIcon /></Slot>
          <Slot><PenIcon /></Slot>
        </Group>
        <Group $w={36} $pad={3}>
          <Slot><MonitorIcon /></Slot>
        </Group>
        <Group $w={98} $pad={4}>
          <Slot><NodeIcon letter /></Slot>
          <Slot><NodeIcon /></Slot>
          <Slot><NodeIcon dense /></Slot>
        </Group>
        <Grip />
        <Group $w={255} $pad={4}>
          <Slot><CurveIcon /></Slot>
          <Slot><BmpText>BMP</BmpText></Slot>
          <Slot><SquareIcon /></Slot>
          <Slot><NodesIcon /></Slot>
          <Slot><OffsetIcon /></Slot>
          <Slot><OffsetIcon small /></Slot>
          <Slot><OutlineIcon /></Slot>
          <Slot><ChecklistIcon /></Slot>
        </Group>
        <Group $w={97} $pad={2}>
          <Slot><ProjectorIcon /></Slot>
          <Slot><PointerLineIcon /></Slot>
          <Slot><RulerIcon /></Slot>
        </Group>
      </Bar>

      <Bar $h={34}>
        <Group $w={179}>
          <Coords>
            <Label>X</Label>
            <Field $w={46} $p="1px 0 0 4px" $ls="-0.25px">428.577</Field>
            <Label $ls="-1.2px">mm</Label>
            <Toggle>
              <svg width="13" height="8" viewBox="0 0 13 8"><path d="M0 4L4 .5V3H9V.5L13 4L9 7.500V5H4V7.500Z" /></svg>
            </Toggle>
            <Field $w={47} $ls="-0.25px">100.001</Field>
            <Label $ls="-1.2px" $p="2px 0 0 1px">mm</Label>
            <Label>Y</Label>
            <Field $w={46} $p="1px 0 0 4px" $ls="-0.25px">443.739</Field>
            <Label $ls="-1.2px">mm</Label>
            <Toggle>
              <svg width="8" height="13" viewBox="0 0 8 13"><path d="M4 0L7.500 4H5V9H7.500L4 13L.5 9H3V4H.5Z" /></svg>
            </Toggle>
            <Field $w={47} $ls="-0.25px">100.001</Field>
            <Label $ls="-1.2px" $p="2px 0 0 1px">mm</Label>
          </Coords>
        </Group>
        <Group $w={108} $pad={1}>
          <Scales>
            <Field $w={31}>100</Field>
            <Label $p="2px 0 0 6px">%</Label>
            <Field $w={31}>100</Field>
            <Label $p="2px 0 0 6px">%</Label>
          </Scales>
          <SquareButton>
            <svg width="17" height="20" viewBox="0 0 17 20" fill="none">
              <path d="M4.500 5V3Q4.500 1.500 6 1.500H12Q13.500 1.500 13.500 3V10" stroke="#000" strokeWidth="2" />
              <rect x="1" y="10" width="15" height="9" rx="2" fill="#000" />
            </svg>
          </SquareButton>
          <SquareButton>
            <svg width="20" height="20" viewBox="0 0 20 20" fill="none" shapeRendering="crispEdges">
              <rect x=".5" y=".5" width="19" height="19" fill="#fff" stroke="#000" />
              <path d="M1 5.500H19M6.500 1V19M14.500 1V5M1 14.500H6" stroke="#000" />
              <rect x="8" y="8" width="5" height="5" fill="#000" />
            </svg>
          </SquareButton>
        </Group>
        <Group $w={202} $pad={4}>
          <Slot $w={33}>
            <Ico soft>
              <path d="M20 21A7.500 7.500 0 1 1 22.500 13" stroke="#111" strokeWidth="1.300" />
              <path d="M19 12.500H26L22.500 18.500Z" fill="#000" />
            </Ico>
          </Slot>
          <Field $w={38} $h={20} $p="3px 0 0 5px">0</Field>
          <Label $p="0 3px 12px 1px">o</Label>
          <Label $p="4px 2px 0 2px" $ls="0px"><DisabledText>Process NO:</DisabledText></Label>
          <Field $w={41} $h={20} $p="3px 0 0 6px">19</Field>
        </Group>
        <Grip />
        <Group $w={191} $pad={3} $lift={2}>
          <Slot><AlignIcon d="M8.500 7V24M9 9.500H18.500V14.500H9" x={15} y={19} rx={5} ry={3} /></Slot>
          <Slot><AlignIcon d="M21.500 7V24M21 9.500H12.500V14.500H21" x={15.5} y={19} rx={5} ry={3} /></Slot>
          <Slot><AlignIcon d="M7 9.500H23M9.500 10V18.500H14.500V10" x={18.5} y={15.5} rx={3} ry={5} /></Slot>
          <Slot><AlignIcon d="M7 21.500H23M9.500 21V12.500H14.500V21" x={18.5} y={15.5} rx={3} ry={5} /></Slot>
          <Slot><AlignIcon d="M7 15.500H23M9.500 11.500H14.500V19.500H9.500Z" x={18.5} y={15.5} rx={3} ry={5} /></Slot>
          <Slot><AlignIcon d="M15.500 7V24M11.500 9.500H20.500V14.500H11.500Z" x={15.5} y={19} rx={5} ry={3} /></Slot>
        </Group>
        <Group $w={161} $pad={4} $lift={2}>
          <Slot><L d="M7 11.500H10.500V19.500H7M23 11.500H19.500V19.500H23M11 15.500H20M12.500 14V17M17.500 14V17" /></Slot>
          <Slot><L d="M11.500 7V10.500H20.500V7M11.500 23V19.500H20.500V23M15.500 11V20M14 12.500H17M14 17.500H17" /></Slot>
          <Slot><L d="M9.500 14.500V11.500H22.500V14.500M7.500 14.500H23.500V19.500H7.500ZM10 17.500H21M10.500 16V19M20.500 16V19" /></Slot>
          <Slot><L d="M11.500 8.500H19.500V22.500H11.500ZM13.500 9V22M16.500 10V21M15 11.500H18M15 19.500H18" /></Slot>
          <Slot><L d="M8.500 8.500H22.500V22.500H8.500ZM15.500 9V22M9 15.500H22M14 10.500H17M14 20.500H17M10.500 14V17M20.500 14V17" /></Slot>
        </Group>
        <Group $w={161} $pad={3} $lift={2}>
          <Slot><CornerIcon r={0} /></Slot>
          <Slot><CornerIcon r={90} /></Slot>
          <Slot><CornerIcon r={180} /></Slot>
          <Slot><CornerIcon r={270} /></Slot>
          <Slot><L d="M8.500 8.500H22.500V22.500H8.500ZM15.500 7V24M7 15.500H24M14 17L20 11M13 15V18H16" /></Slot>
        </Group>
        <Group $w={129} $pad={4} $lift={2}>
          <Slot><EdgeIcon r={0} /></Slot>
          <Slot><EdgeIcon r={180} /></Slot>
          <Slot $w={32}><EdgeIcon r={90} /></Slot>
          <Slot $w={29}><EdgeIcon r={270} /></Slot>
        </Group>
      </Bar>

      <Main>
        <ToolColumn>
          <ToolGrip />
          <ToolSlot $on><ArrowTool /></ToolSlot>
          <ToolSlot><NodeTool /></ToolSlot>
          <ToolRule />
          <ToolSlot><LineTool /></ToolSlot>
          <ToolSlot><PolyTool /></ToolSlot>
          <ToolSlot><SplineTool /></ToolSlot>
          <ToolSlot><RectTool /></ToolSlot>
          <ToolSlot><EllipseTool /></ToolSlot>
          <ToolSlot><TextTool /></ToolSlot>
          <ToolSlot><PointTool /></ToolSlot>
          <ToolRule />
          <ToolSlot><CameraTool /></ToolSlot>
          <ToolRule />
          <ToolSlot><GridTool /></ToolSlot>
          <ToolRule />
          <ToolSlot><DeleteTool /></ToolSlot>
          <ToolRule />
          <ToolSlot><MirrorTool /></ToolSlot>
          <ToolSlot><MirrorVTool /></ToolSlot>
          <ToolSlot><OriginTool /></ToolSlot>
          <ToolSlot><ArrayTool /></ToolSlot>
        </ToolColumn>
        <SideRuler>
          <TopRuler />
          <VRuler />
        </SideRuler>
        <CanvasColumn>
          <TopRuler><HRuler /></TopRuler>
          <CanvasRow>
            <Sheet><Drawing /></Sheet>
            <VScroll>
              <Chevron r={0} />
              <Thumb $w={15} $h={18} $m="0 0 101px" />
              <Chevron r={180} />
            </VScroll>
          </CanvasRow>
          <HScroll>
            <Chevron r={-90} />
            <Thumb $w={17} $h={15} $m="0 0 0 186px" />
            <Chevron r={90} />
          </HScroll>
        </CanvasColumn>

        <Dock>
          <DockPane $h={380}>
            <PaneBody $h={376}>
              <PaneHead><PaneGrip /><CloseX /></PaneHead>
              <Tabs>
                <Tab $on $w={44}>Work</Tab>
                <Tab $w={44}>Output</Tab>
                <Tab $w={41}>Doc</Tab>
                <Tab $w={41}>User</Tab>
                <Tab $w={41}>Test</Tab>
                <Tab $w={61}>Transform</Tab>
              </Tabs>
              <LayerBox>
                <LayerHead>
                  <HeadCell $left>Layer</HeadCell>
                  <HeadCell>Mode</HeadCell>
                  <HeadCell>Output</HeadCell>
                  <HeadCell $last>Hide</HeadCell>
                </LayerHead>
                <LayerRow>
                  <Cell $bg={CUT} />
                  <Cell $bg="#0000c8">Cut</Cell>
                  <Cell $bg="#0000c8">Yes</Cell>
                  <Cell $bg="#0000c8">No</Cell>
                </LayerRow>
                {ROW_HEIGHTS.map((h, i) => (
                  <LayerRow key={i} $h={h}><Cell /><Cell /><Cell /><Cell /></LayerRow>
                ))}
                <ListScroll><Chevron r={-90} /><Thumb $w={230} $h={15} /><Chevron r={90} /></ListScroll>
              </LayerBox>
              <Params>
                <ParamRow>
                  <ParamName>Color</ParamName>
                  <ParamValue $swatch><Swatch /></ParamValue>
                </ParamRow>
                {PARAMS.map(([name, value]) => (
                  <ParamRow key={name}>
                    <ParamName>{name}</ParamName>
                    <ParamValue>{value}</ParamValue>
                  </ParamRow>
                ))}
              </Params>
              <LaserTabs>
                <LaserTab $w={41}>Laser1</LaserTab>
                <LaserTab $w={44} $pl={3}>Laser2</LaserTab>
              </LaserTabs>
              <Fieldset $m="6px 0 0 9px" $w={275} $h={80}>
                <Legend>Line/column setup</Legend>
                <ArrayHead>
                  <span>Num</span>
                  <span>space1</span>
                  <span>space2</span>
                  <span>Dislocation</span>
                  <span>Mirror</span>
                </ArrayHead>
                <ArrayRow>
                  <AxisLabel>X:</AxisLabel>
                  <Field $w={33} $h={20} $p="3px 0 0 5px">1</Field>
                  <Field $w={47} $h={20} $p="3px 0 0 5px">0.000</Field>
                  <Field $w={47} $h={20} $p="3px 0 0 5px">0.000</Field>
                  <Field $w={46} $h={20} $p="3px 0 0 5px">0.000</Field>
                  <MirrorBox>
                    <CheckBox $off />H<CheckBox $off />V
                  </MirrorBox>
                </ArrayRow>
              </Fieldset>
            </PaneBody>
          </DockPane>
          <DockPane $h={223}>
            <PaneBody $h={219}>
              <PaneHead><PaneGrip /><CloseX /></PaneHead>
              <Fieldset $m="3px 0 0 6px" $w={286} $h={151}>
                <Legend>Laser work</Legend>
                <ButtonRow $mt={3}>
                  <Button $w={101}>Pause/Continue</Button>
                  <Button $w={72}>Stop</Button>
                </ButtonRow>
                <ButtonRow $mt={2}>
                  <Button $w={92}>SaveToUFile</Button>
                  <Button $w={101}>UFileOutput</Button>
                  <Button $w={72}>Download</Button>
                </ButtonRow>
                <SelectRow>
                  <Label $p="8px 0 0 0" $ls="-0.1px">Position:</Label>
                  <Select>Current position<DropArrow /></Select>
                </SelectRow>
                <CheckRow $m="10px 0 0 8px">
                  <CheckBox>
                    <svg width="10" height="10" viewBox="0 0 10 10" fill="none">
                      <path d="M2 4L4.500 7L9 2.500" stroke="#000" strokeWidth="2" />
                    </svg>
                  </CheckBox>
                  Path optimize
                </CheckRow>
                <CheckRow $m="0 0 0 8px"><CheckBox />Output select graphics</CheckRow>
                <CheckRow $off $m="3px 0 0 25px"><CheckBox $off />Selected graphics position</CheckRow>
              </Fieldset>
              <Fieldset $m="5px 0 0 6px" $w={286} $h={60}>
                <Legend>Device</Legend>
                <ButtonRow $mt={5} $gap={5} $pr={8}>
                  <Button $w={93}>Port setting</Button>
                  <Select $lh={17}>Device---(USB:COM6)<DropArrow /></Select>
                </ButtonRow>
              </Fieldset>
            </PaneBody>
          </DockPane>
        </Dock>
      </Main>

      <Palette>
        <PaletteHead>
          <CloseX />
          <svg width="7" height="9" viewBox="0 0 7 9" fill="none" shapeRendering="crispEdges">
            <path d="M0 8.500H2.500V0M4 8.500H6.500V0" stroke="#b0b0b0" />
          </svg>
        </PaletteHead>
        {COLORS.map((c) => <Chip key={c} $c={c} />)}
      </Palette>
      <Status>
        <StatusCell $w={817} $ls="-0.1px">--- *Welcome to use the Laser system of cutting,Propose the display area 1024*768 or higher *---</StatusCell>
        <StatusCell $w={21} />
        <StatusCell $w={10} />
        <StatusCell $w={321}>1 curve object,unnamed,SizeX100.001,Y100.001</StatusCell>
        <StatusCell $w={189} $last>X:517.980mm,Y:419.101mm</StatusCell>
      </Status>
      <Taskbar />
    </Window>
  );
}
